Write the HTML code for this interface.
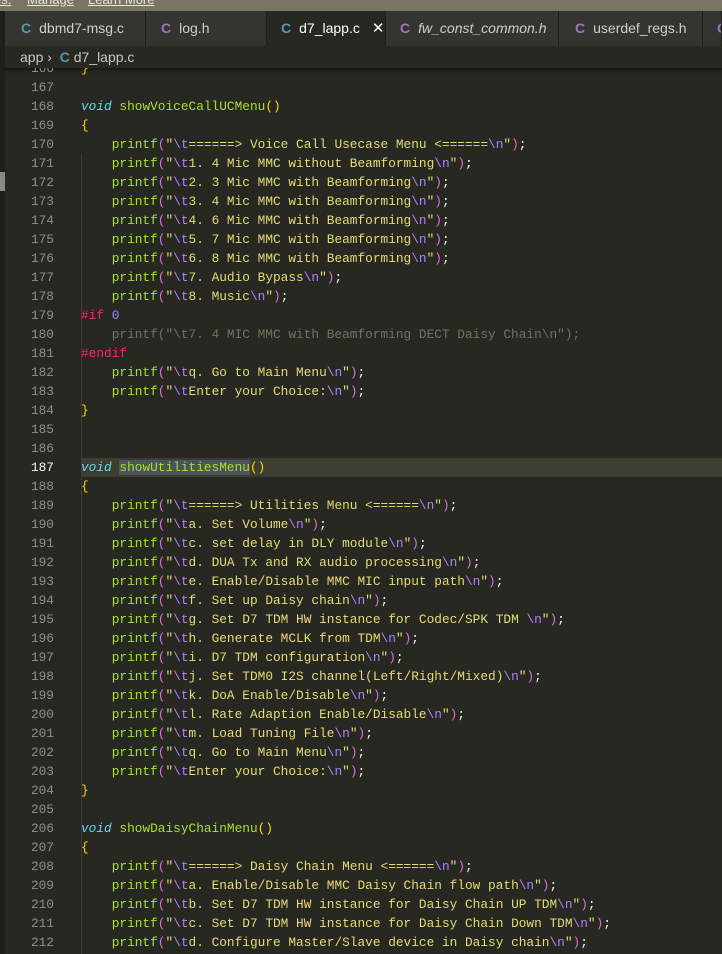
<!DOCTYPE html>
<html><head><meta charset="utf-8"><style>
*{margin:0;padding:0;box-sizing:border-box}
body{width:722px;height:954px;overflow:hidden;background:#272822;font-family:"Liberation Sans",sans-serif;position:relative}
#banner{position:absolute;left:0;top:0;width:722px;height:11px;background:#7a7463;overflow:hidden}
#banner span{position:absolute;top:-8px;color:#e8e4d8;font-size:13px;text-decoration:underline}
#tabs{position:absolute;left:0;top:11px;width:722px;height:35px;background:#1e1f1c}
.tab{position:absolute;top:0;height:35px;background:#34352f;color:#cfcfc2;font-size:14px;line-height:35px;border-right:1px solid #1e1f1c;white-space:nowrap;overflow:hidden}
.tab b{font-weight:bold;margin-right:8px;font-size:14px}
.tab.act{background:#272822;color:#fff}
#crumb{position:absolute;left:5px;top:46px;width:717px;height:22px;background:#272822;color:#c8c8bc;font-size:14px;line-height:22px;padding-left:15px;white-space:nowrap}
#left{position:absolute;left:0;top:46px;width:5px;height:908px;background:#1e1f1c}
#ed{position:absolute;left:5px;top:68px;width:717px;height:886px;overflow:hidden;box-shadow:inset 0 6px 6px -6px #000}
#code{position:absolute;left:0;top:-9px;width:717px}
.l{height:19px;line-height:19px;position:relative;white-space:pre;font-family:"Liberation Mono",monospace;font-size:12.8px;color:#f8f8f2}
.n{position:absolute;left:0;width:49px;text-align:right;color:#90908a}
.c{position:absolute;left:76px}
.f{color:#a6e22e}.p{color:#da70d6}.s{color:#e6db74}.e{color:#ae81ff}.y{color:#ffd700}.k{color:#66d9ef;font-style:italic}.m{color:#f92672}.g{color:#75715e}
.cur{background:#3e3d32}
#guide{position:absolute;left:76px;top:0;width:1px;height:900px;background:#3b3c35}
</style></head><body>
<div id="banner"><span style="left:-6px">es.</span><span style="left:27px">Manage</span><span style="left:88px">Learn More</span></div>
<div id="tabs">
<div class="tab" style="left:5px;width:141px;padding-left:16px"><b style="color:#519aba">C</b>dbmd7-msg.c</div>
<div class="tab" style="left:146px;width:121px;padding-left:15px"><b style="color:#a074c4">C</b>log.h</div>
<div class="tab act" style="left:267px;width:119px;padding-left:14px"><b style="color:#519aba">C</b>d7_lapp.c<span style="margin-left:12px;font-size:15px">✕</span></div>
<div class="tab" style="left:386px;width:173px;padding-left:14px"><b style="color:#a074c4">C</b><i>fw_const_common.h</i></div>
<div class="tab" style="left:559px;width:144px;padding-left:16px"><b style="color:#a074c4">C</b>userdef_regs.h</div>
<div class="tab" style="left:703px;width:19px;padding-left:14px"><b style="color:#a074c4">C</b></div>
</div>
<div id="left"></div>
<div id="crumb">app ›&nbsp; <b style="color:#519aba">C</b> d7_lapp.c</div>
<div style="position:absolute;left:0;top:172px;width:5px;height:19px;background:#8a8a80"></div>
<div id="ed"><div id="code">
<div id="guide" style="top:95px;height:800px"></div>
<div class="l"><span class="n">166</span><span class="c"><span class="y">}</span></span></div>
<div class="l"><span class="n">167</span></div>
<div class="l"><span class="n">168</span><span class="c"><span class="k">void</span> <span class="f">showVoiceCallUCMenu</span><span class="y">()</span></span></div>
<div class="l"><span class="n">169</span><span class="c"><span class="y">{</span></span></div>
<div class="l"><span class="n">170</span><span class="c">    <span class="f">printf</span><span class="p">(</span><span class="s">"<span class="e">\t</span>======&gt; Voice Call Usecase Menu &lt;======<span class="e">\n</span>"</span><span class="p">)</span>;</span></div>
<div class="l"><span class="n">171</span><span class="c">    <span class="f">printf</span><span class="p">(</span><span class="s">"<span class="e">\t</span>1. 4 Mic MMC without Beamforming<span class="e">\n</span>"</span><span class="p">)</span>;</span></div>
<div class="l"><span class="n">172</span><span class="c">    <span class="f">printf</span><span class="p">(</span><span class="s">"<span class="e">\t</span>2. 3 Mic MMC with Beamforming<span class="e">\n</span>"</span><span class="p">)</span>;</span></div>
<div class="l"><span class="n">173</span><span class="c">    <span class="f">printf</span><span class="p">(</span><span class="s">"<span class="e">\t</span>3. 4 Mic MMC with Beamforming<span class="e">\n</span>"</span><span class="p">)</span>;</span></div>
<div class="l"><span class="n">174</span><span class="c">    <span class="f">printf</span><span class="p">(</span><span class="s">"<span class="e">\t</span>4. 6 Mic MMC with Beamforming<span class="e">\n</span>"</span><span class="p">)</span>;</span></div>
<div class="l"><span class="n">175</span><span class="c">    <span class="f">printf</span><span class="p">(</span><span class="s">"<span class="e">\t</span>5. 7 Mic MMC with Beamforming<span class="e">\n</span>"</span><span class="p">)</span>;</span></div>
<div class="l"><span class="n">176</span><span class="c">    <span class="f">printf</span><span class="p">(</span><span class="s">"<span class="e">\t</span>6. 8 Mic MMC with Beamforming<span class="e">\n</span>"</span><span class="p">)</span>;</span></div>
<div class="l"><span class="n">177</span><span class="c">    <span class="f">printf</span><span class="p">(</span><span class="s">"<span class="e">\t</span>7. Audio Bypass<span class="e">\n</span>"</span><span class="p">)</span>;</span></div>
<div class="l"><span class="n">178</span><span class="c">    <span class="f">printf</span><span class="p">(</span><span class="s">"<span class="e">\t</span>8. Music<span class="e">\n</span>"</span><span class="p">)</span>;</span></div>
<div class="l"><span class="n">179</span><span class="c"><span class="m">#if</span> <span class="e">0</span></span></div>
<div class="l"><span class="n">180</span><span class="c g">    printf("\t7. 4 MIC MMC with Beamforming DECT Daisy Chain\n");</span></div>
<div class="l"><span class="n">181</span><span class="c"><span class="m">#endif</span></span></div>
<div class="l"><span class="n">182</span><span class="c">    <span class="f">printf</span><span class="p">(</span><span class="s">"<span class="e">\t</span>q. Go to Main Menu<span class="e">\n</span>"</span><span class="p">)</span>;</span></div>
<div class="l"><span class="n">183</span><span class="c">    <span class="f">printf</span><span class="p">(</span><span class="s">"<span class="e">\t</span>Enter your Choice:<span class="e">\n</span>"</span><span class="p">)</span>;</span></div>
<div class="l"><span class="n">184</span><span class="c"><span class="y">}</span></span></div>
<div class="l"><span class="n">185</span></div>
<div class="l"><span class="n">186</span></div>
<div class="l"><div class="cur" style="position:absolute;left:76px;right:0;top:0;height:19px"></div><span class="n" style="color:#f8f8f2">187</span><span class="c"><span class="k">void</span> <span class="f" style="background:#4b535c">showUtilitiesMenu</span><span class="y">()</span></span></div>
<div class="l"><span class="n">188</span><span class="c"><span class="y">{</span></span></div>
<div class="l"><span class="n">189</span><span class="c">    <span class="f">printf</span><span class="p">(</span><span class="s">"<span class="e">\t</span>======&gt; Utilities Menu &lt;======<span class="e">\n</span>"</span><span class="p">)</span>;</span></div>
<div class="l"><span class="n">190</span><span class="c">    <span class="f">printf</span><span class="p">(</span><span class="s">"<span class="e">\t</span>a. Set Volume<span class="e">\n</span>"</span><span class="p">)</span>;</span></div>
<div class="l"><span class="n">191</span><span class="c">    <span class="f">printf</span><span class="p">(</span><span class="s">"<span class="e">\t</span>c. set delay in DLY module<span class="e">\n</span>"</span><span class="p">)</span>;</span></div>
<div class="l"><span class="n">192</span><span class="c">    <span class="f">printf</span><span class="p">(</span><span class="s">"<span class="e">\t</span>d. DUA Tx and RX audio processing<span class="e">\n</span>"</span><span class="p">)</span>;</span></div>
<div class="l"><span class="n">193</span><span class="c">    <span class="f">printf</span><span class="p">(</span><span class="s">"<span class="e">\t</span>e. Enable/Disable MMC MIC input path<span class="e">\n</span>"</span><span class="p">)</span>;</span></div>
<div class="l"><span class="n">194</span><span class="c">    <span class="f">printf</span><span class="p">(</span><span class="s">"<span class="e">\t</span>f. Set up Daisy chain<span class="e">\n</span>"</span><span class="p">)</span>;</span></div>
<div class="l"><span class="n">195</span><span class="c">    <span class="f">printf</span><span class="p">(</span><span class="s">"<span class="e">\t</span>g. Set D7 TDM HW instance for Codec/SPK TDM <span class="e">\n</span>"</span><span class="p">)</span>;</span></div>
<div class="l"><span class="n">196</span><span class="c">    <span class="f">printf</span><span class="p">(</span><span class="s">"<span class="e">\t</span>h. Generate MCLK from TDM<span class="e">\n</span>"</span><span class="p">)</span>;</span></div>
<div class="l"><span class="n">197</span><span class="c">    <span class="f">printf</span><span class="p">(</span><span class="s">"<span class="e">\t</span>i. D7 TDM configuration<span class="e">\n</span>"</span><span class="p">)</span>;</span></div>
<div class="l"><span class="n">198</span><span class="c">    <span class="f">printf</span><span class="p">(</span><span class="s">"<span class="e">\t</span>j. Set TDM0 I2S channel(Left/Right/Mixed)<span class="e">\n</span>"</span><span class="p">)</span>;</span></div>
<div class="l"><span class="n">199</span><span class="c">    <span class="f">printf</span><span class="p">(</span><span class="s">"<span class="e">\t</span>k. DoA Enable/Disable<span class="e">\n</span>"</span><span class="p">)</span>;</span></div>
<div class="l"><span class="n">200</span><span class="c">    <span class="f">printf</span><span class="p">(</span><span class="s">"<span class="e">\t</span>l. Rate Adaption Enable/Disable<span class="e">\n</span>"</span><span class="p">)</span>;</span></div>
<div class="l"><span class="n">201</span><span class="c">    <span class="f">printf</span><span class="p">(</span><span class="s">"<span class="e">\t</span>m. Load Tuning File<span class="e">\n</span>"</span><span class="p">)</span>;</span></div>
<div class="l"><span class="n">202</span><span class="c">    <span class="f">printf</span><span class="p">(</span><span class="s">"<span class="e">\t</span>q. Go to Main Menu<span class="e">\n</span>"</span><span class="p">)</span>;</span></div>
<div class="l"><span class="n">203</span><span class="c">    <span class="f">printf</span><span class="p">(</span><span class="s">"<span class="e">\t</span>Enter your Choice:<span class="e">\n</span>"</span><span class="p">)</span>;</span></div>
<div class="l"><span class="n">204</span><span class="c"><span class="y">}</span></span></div>
<div class="l"><span class="n">205</span></div>
<div class="l"><span class="n">206</span><span class="c"><span class="k">void</span> <span class="f">showDaisyChainMenu</span><span class="y">()</span></span></div>
<div class="l"><span class="n">207</span><span class="c"><span class="y">{</span></span></div>
<div class="l"><span class="n">208</span><span class="c">    <span class="f">printf</span><span class="p">(</span><span class="s">"<span class="e">\t</span>======&gt; Daisy Chain Menu &lt;======<span class="e">\n</span>"</span><span class="p">)</span>;</span></div>
<div class="l"><span class="n">209</span><span class="c">    <span class="f">printf</span><span class="p">(</span><span class="s">"<span class="e">\t</span>a. Enable/Disable MMC Daisy Chain flow path<span class="e">\n</span>"</span><span class="p">)</span>;</span></div>
<div class="l"><span class="n">210</span><span class="c">    <span class="f">printf</span><span class="p">(</span><span class="s">"<span class="e">\t</span>b. Set D7 TDM HW instance for Daisy Chain UP TDM<span class="e">\n</span>"</span><span class="p">)</span>;</span></div>
<div class="l"><span class="n">211</span><span class="c">    <span class="f">printf</span><span class="p">(</span><span class="s">"<span class="e">\t</span>c. Set D7 TDM HW instance for Daisy Chain Down TDM<span class="e">\n</span>"</span><span class="p">)</span>;</span></div>
<div class="l"><span class="n">212</span><span class="c">    <span class="f">printf</span><span class="p">(</span><span class="s">"<span class="e">\t</span>d. Configure Master/Slave device in Daisy chain<span class="e">\n</span>"</span><span class="p">)</span>;</span></div>
<div class="l"><span class="n">213</span></div>
</div></div>
</body></html>
